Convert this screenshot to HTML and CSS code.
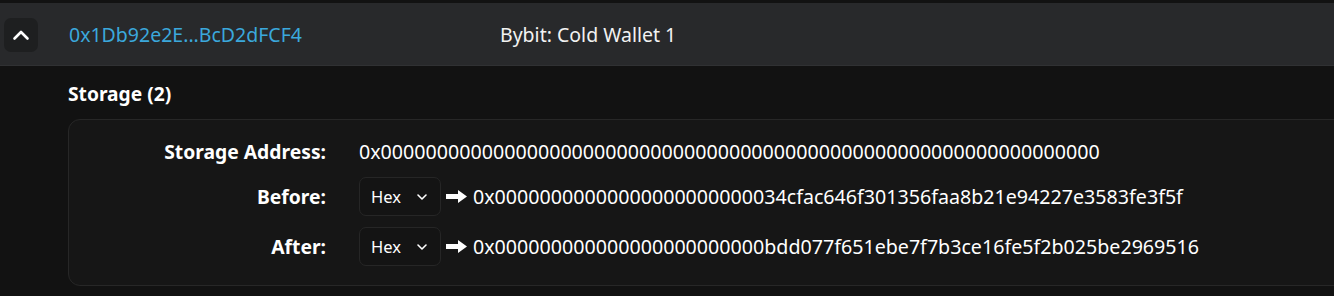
FILE: index.html
```html
<!DOCTYPE html>
<html>
<head>
<meta charset="utf-8">
<link rel="stylesheet" href="styles.css">
</head>
<body>
<div class="page">
  <div class="account-row">
    <button class="toggle" aria-label="Collapse">
      <svg width="18" height="12" viewBox="0 0 18 12"><path d="M2.5 9.5 L9 3 L15.5 9.5" fill="none" stroke="#fff" stroke-width="2.6" stroke-linecap="round" stroke-linejoin="round"/></svg>
    </button>
    <a class="address" href="#">0x1Db92e2E...BcD2dFCF4</a>
    <span class="label-name">Bybit: Cold Wallet 1</span>
  </div>
  <section class="storage">
    <h3 class="storage-title">Storage (2)</h3>
    <div class="card">
      <div class="row row-first">
        <div class="key">Storage Address:</div>
        <div class="val">0x0000000000000000000000000000000000000000000000000000000000000000</div>
      </div>
      <div class="row">
        <div class="key">Before:</div>
        <div class="val">
          <div class="select">Hex
            <svg width="12" height="8" viewBox="0 0 12 8"><path d="M2 2 L6 6 L10 2" fill="none" stroke="#fff" stroke-width="1.6" stroke-linecap="round" stroke-linejoin="round"/></svg>
          </div>
          <svg class="arrow" width="21" height="13" viewBox="0 0 21 13"><path d="M0 4 H12 V0 L21 6.5 L12 13 V9 H0 Z" fill="#fff"/></svg>
          <span>0x00000000000000000000000034cfac646f301356faa8b21e94227e3583fe3f5f</span>
        </div>
      </div>
      <div class="row">
        <div class="key">After:</div>
        <div class="val">
          <div class="select">Hex
            <svg width="12" height="8" viewBox="0 0 12 8"><path d="M2 2 L6 6 L10 2" fill="none" stroke="#fff" stroke-width="1.6" stroke-linecap="round" stroke-linejoin="round"/></svg>
          </div>
          <svg class="arrow" width="21" height="13" viewBox="0 0 21 13"><path d="M0 4 H12 V0 L21 6.5 L12 13 V9 H0 Z" fill="#fff"/></svg>
          <span>0x000000000000000000000000bdd077f651ebe7f7b3ce16fe5f2b025be2969516</span>
        </div>
      </div>
    </div>
  </section>
</div>
</body>
</html>
```
FILE: styles.css
```css
html, body {
  margin: 0;
  padding: 0;
  background: #121212;
  overflow: hidden;
}
body {
  font-family: "Noto Sans", "Open Sans", sans-serif;
  color: #ffffff;
}
.page {
  padding-top: 3px;
}
.account-row {
  height: 62px;
  background: #28292b;
  border-bottom: 1px solid #303133;
  display: flex;
  align-items: center;
  padding-left: 4px;
}
.toggle {
  width: 34px;
  height: 34px;
  border: none;
  border-radius: 7px;
  background: #1e1f20;
  display: flex;
  align-items: center;
  justify-content: center;
  padding: 0;
  margin-top: 1px;
}
.address {
  color: #3ba8dc;
  text-decoration: none;
  font-size: 19.5px;
  margin-left: 31px;
  width: 431px;
}
.label-name {
  font-size: 19.5px;
  color: #f2f2f2;
}
.storage {
  padding-left: 68px;
}
.storage-title {
  margin: 0;
  padding-top: 15px;
  height: 38px;
  font-size: 19.2px;
  font-weight: 700;
  line-height: 26px;
}
.card {
  width: 1400px;
  background: #161616;
  border: 1px solid #272727;
  border-radius: 12px;
  padding: 16px 0 19px 0;
  display: flex;
  flex-direction: column;
  gap: 11px;
}
.row {
  display: flex;
  align-items: center;
  height: 39px;
}
.row-first {
  height: 30px;
}
.key {
  width: 257px;
  text-align: right;
  font-weight: 700;
  font-size: 19.3px;
  margin-right: 33px;
}
.val {
  display: flex;
  align-items: center;
  font-size: 19.65px;
}
.select {
  width: 82px;
  height: 39px;
  box-sizing: border-box;
  border: 1px solid #262626;
  border-radius: 7px;
  background: #141414;
  display: flex;
  align-items: center;
  justify-content: space-between;
  padding: 0 12px 0 11px;
  font-size: 16.5px;
}
.arrow {
  margin-left: 5px;
  margin-right: 6px;
}
```
